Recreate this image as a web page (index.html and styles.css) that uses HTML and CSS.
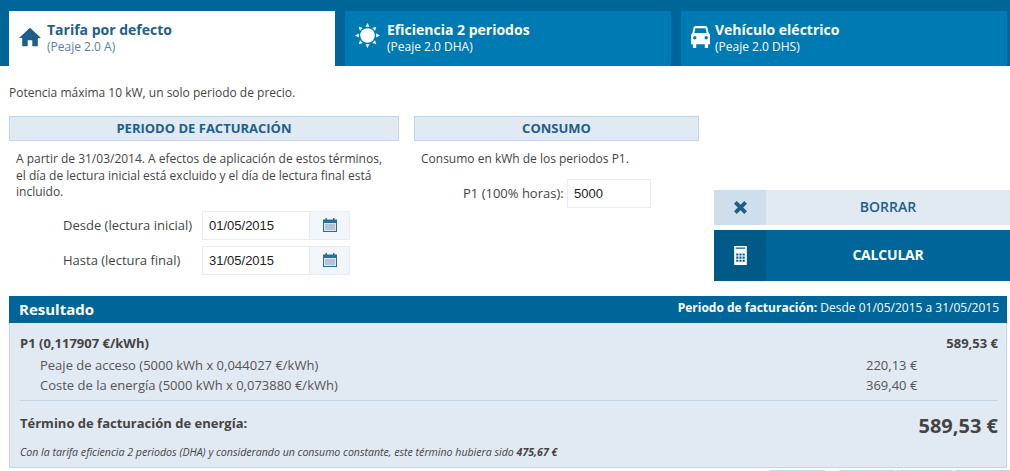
FILE: index.html
```html
<!DOCTYPE html>
<html lang="es">
<head>
<meta charset="utf-8">
<title>Simulador de factura</title>
<link rel="stylesheet" href="styles.css">
</head>
<body>
<nav class="tabs">
  <a class="tab tab-active">
    <svg class="tab-icon icon-home" viewBox="0 0 24 20"><path d="M12 0 L24 11 H20.5 V20 H14.5 V13.5 H9.5 V20 H3.5 V11 H0 Z"/></svg>
    <span class="tab-text"><b>Tarifa por defecto</b><small>(Peaje 2.0 A)</small></span>
  </a>
  <a class="tab">
    <svg class="tab-icon icon-sun" viewBox="0 0 26 26"><circle cx="13" cy="13" r="7.6"/><path d="M13 0 L15 4 H11 Z M13 26 L11 22 H15 Z M0 13 L4 11 V15 Z M26 13 L22 15 V11 Z M3.8 3.8 L8 5.2 L5.2 8 Z M22.2 3.8 L20.8 8 L18 5.2 Z M3.8 22.2 L5.2 18 L8 20.8 Z M22.2 22.2 L18 20.8 L20.8 18 Z"/></svg>
    <span class="tab-text"><b>Eficiencia 2 periodos</b><small>(Peaje 2.0 DHA)</small></span>
  </a>
  <a class="tab">
    <svg class="tab-icon icon-car" viewBox="0 0 20 23"><path fill-rule="evenodd" d="M5 0 H15 C16.2 0 17 .8 17.4 2 L18.6 7.500 C19.6 8 20 8.900 20 10 V19 H18 V23 H14.500 V19 H5.500 V23 H2 V19 H0 V10 C0 8.900 .4 8 1.400 7.500 L2.600 2 C3 .8 3.800 0 5 0 Z M5 2.200 C4.700 2.200 4.600 2.400 4.500 2.700 L3.500 7.300 H16.500 L15.500 2.700 C15.400 2.400 15.300 2.200 15 2.200 Z M4 10.500 A1.800 1.800 0 1 0 4 14.100 A1.800 1.800 0 1 0 4 10.500 Z M16 10.500 A1.800 1.800 0 1 0 16 14.100 A1.800 1.800 0 1 0 16 10.500 Z"/></svg>
    <span class="tab-text"><b>Vehículo eléctrico</b><small>(Peaje 2.0 DHS)</small></span>
  </a>
</nav>

<p class="intro">Potencia máxima 10 kW, un solo periodo de precio.</p>

<main class="columns">
  <section class="col col-period">
    <h2 class="col-title">PERIODO DE FACTURACIÓN</h2>
    <p class="col-text">A partir de 31/03/2014. A efectos de aplicación de estos términos, el día de lectura inicial está excluido y el día de lectura final está incluido.</p>
    <div class="date-row">
      <label class="date-label">Desde (lectura inicial)</label>
      <div class="date-field"><span class="date-value">01/05/2015</span><span class="date-btn"><svg class="cal" viewBox="0 0 14 14"><use href="#cal-icon"/></svg></span></div>
    </div>
    <div class="date-row">
      <label class="date-label">Hasta (lectura final)</label>
      <div class="date-field"><span class="date-value">31/05/2015</span><span class="date-btn"><svg class="cal" viewBox="0 0 14 14"><use href="#cal-icon"/></svg></span></div>
    </div>
  </section>

  <section class="col col-consumo">
    <h2 class="col-title">CONSUMO</h2>
    <p class="col-text">Consumo en kWh de los periodos P1.</p>
    <div class="consumo-row">
      <label class="consumo-label">P1 (100% horas):</label>
      <span class="consumo-value">5000</span>
    </div>
  </section>

  <section class="col col-actions">
    <button class="action action-clear"><span class="action-icon"><svg viewBox="0 0 12 12" width="13" height="13"><path d="M2.500 0 L6 3.500 L9.500 0 L12 2.500 L8.500 6 L12 9.500 L9.500 12 L6 8.500 L2.500 12 L0 9.500 L3.500 6 L0 2.500 Z"/></svg></span><span class="action-text">BORRAR</span></button>
    <button class="action action-calc"><span class="action-icon"><svg viewBox="0 0 12 18" width="13" height="19"><path fill-rule="evenodd" d="M0 0 H12 V18 H0 Z M2 7 V9 H4 V7 Z M5 7 V9 H7 V7 Z M8 7 V9 H10 V7 Z M2 10 V12 H4 V10 Z M5 10 V12 H7 V10 Z M8 10 V12 H10 V10 Z M2 13 V15 H4 V13 Z M5 13 V15 H7 V13 Z M8 13 V15 H10 V13 Z M1.500 1.500 V2.500 H10.500 V1.500 Z"/></svg></span><span class="action-text">CALCULAR</span></button>
  </section>
</main>

<section class="result">
  <header class="result-head">
    <h2 class="result-title">Resultado</h2>
    <p class="result-period"><b>Periodo de facturación:</b> Desde 01/05/2015 a 31/05/2015</p>
  </header>
  <div class="result-body">
    <div class="line line-main"><span>P1 (0,117907 €/kWh)</span><span>589,53 €</span></div>
    <div class="line line-sub"><span>Peaje de acceso (5000 kWh x 0,044027 €/kWh)</span><span class="amount">220,13 €</span></div>
    <div class="line line-sub"><span>Coste de la energía (5000 kWh x 0,073880 €/kWh)</span><span class="amount">369,40 €</span></div>
    <div class="total"><span class="total-label">Término de facturación de energía:</span><span class="total-value">589,53 €</span></div>
    <p class="note">Con la tarifa eficiencia 2 periodos (DHA) y considerando un consumo constante, este término hubiera sido <b>475,67 €</b></p>
  </div>
</section>

<div class="below"><span class="below-box"></span><span class="below-box"></span><span class="below-box"></span><span class="below-box"></span></div>

<svg class="defs" width="0" height="0"><symbol id="cal-icon" viewBox="0 0 14 14"><path fill="#2a6f9c" d="M0 1.500 H2.500 V0 H4 V1.500 H10 V0 H11.500 V1.500 H14 V14 H0 Z"/><path fill="#dbe5ef" d="M1 5 H13 V13 H1 Z"/><path fill="#8aa6bb" d="M2 6.500 H12 V7.500 H2 Z M2 8.500 H12 V9.500 H2 Z M2 10.500 H12 V11.500 H2 Z"/></symbol></svg>
</body>
</html>
```
FILE: styles.css
```css
* { box-sizing: border-box; }
html, body { margin: 0; padding: 0; }
body {
  width: 1010px;
  height: 471px;
  overflow: hidden;
  background: #fff;
  color: #444;
  font-family: "Open Sans", "Noto Sans", sans-serif;
  font-size: 12px;
}
.tabs {
  display: flex;
  gap: 10px;
  height: 66px;
  padding: 11px 3px 0 9px;
  background: #006699;
}
.tab {
  flex: 0 0 326px;
  display: flex;
  align-items: flex-start;
  padding: 10px 0 0 10px;
  background: #007ab3;
  color: #fff;
}
.tab-active { background: #fff; color: #1d5f8a; }
.tab-active small { color: #5b7f9f; }
.tab-icon { fill: currentColor; flex: none; }
.icon-home { width: 22px; height: 20px; margin: 6px 6px 0 0; }
.icon-sun { width: 25px; height: 25px; margin: 2px 7px 0 0; }
.icon-car { width: 19px; height: 22px; margin: 5px 5px 0 0; }
.tab-text { display: flex; flex-direction: column; }
.tab-text b { font-size: 14px; line-height: 18px; font-weight: 700; }
.tab-text small { font-size: 12px; line-height: 16px; }
.intro { margin: 0; padding: 19px 0 0 9px; height: 50px; line-height: 15px; }
.columns { display: flex; height: 180px; padding-left: 9px; }
.col-period { width: 390px; margin-right: 15px; }
.col-consumo { width: 285px; margin-right: 15px; }
.col-actions { width: 296px; padding-top: 74px; display: flex; flex-direction: column; gap: 5px; }
.col-title {
  margin: 0;
  height: 25px;
  background: #e1e9f3;
  border: 1px solid #c5d5e5;
  color: #1d5f8a;
  font-size: 13px;
  font-weight: 700;
  line-height: 23px;
  text-align: center;
}
.col-text { margin: 10px 0 0; padding: 0 7px; line-height: 16.5px; }
.col-period .col-text { height: 60px; }
.date-row { display: flex; align-items: center; height: 29px; margin-bottom: 6px; }
.date-row:last-child { margin-bottom: 0; }
.date-label { width: 193px; padding: 0 0 2px 54px; font-size: 13px; white-space: nowrap; }
.date-field { display: flex; width: 148px; height: 29px; border: 1px solid #e7edf3; }
.date-value { flex: 1; padding-left: 6px; font: 13px/27px "Liberation Sans", Arial, sans-serif; color: #222; }
.date-btn { width: 40px; padding-bottom: 2px; background: #f2f6fa; border-left: 1px solid #e7edf3; display: flex; align-items: center; justify-content: center; }
.cal { width: 14px; height: 14px; }
.consumo-row { display: flex; align-items: center; height: 29px; margin-top: 11px; }
.consumo-label { width: 153px; padding-left: 49px; font-size: 13px; white-space: nowrap; }
.consumo-value { width: 84px; height: 29px; border: 1px solid #e7edf3; padding-left: 6px; font: 13px/27px "Liberation Sans", Arial, sans-serif; color: #222; }
.action { display: flex; align-items: stretch; padding: 0; border: 0; font-family: inherit; font-size: 14px; font-weight: 600; }
.action-clear { height: 35px; background: #e1e9f3; color: #1d5f8a; }
.action-calc { height: 51px; background: #006699; color: #fff; font-weight: 700; letter-spacing: -0.2px; }
.action-icon { width: 52px; display: flex; align-items: center; justify-content: center; }
.action-clear .action-icon { background: #cfdeec; }
.action-calc .action-icon { background: #005a87; }
.action-icon svg { fill: currentColor; }
.action-text { flex: 1; align-self: center; padding-bottom: 2px; text-align: center; }
.result { margin: 0 3px 0 9px; }
.result-head { display: flex; justify-content: space-between; align-items: center; height: 27px; padding: 0 7px 0 10px; background: #006699; color: #fff; }
.result-title { margin: 0 0 2px; font-size: 15px; font-weight: 700; }
.result-period { margin: 0 1px 5px 0; font-size: 12px; }
.result-body { height: 145px; padding: 10px 8px 0 10px; background: #e1e9f3; border: 1px solid #c5d5e5; border-top: 0; }
.line { display: flex; justify-content: space-between; line-height: 20px; }
.line-main { font-size: 13px; font-weight: 700; height: 22px; }
.line-sub { font-size: 13px; padding-left: 20px; color: #555; }
.amount { width: 132px; }
.total { display: flex; justify-content: space-between; align-items: center; height: 44px; margin: 5px 0 1px; border-top: 1px solid #c5d5e5; }
.total-label { font-size: 13px; font-weight: 700; }
.total-value { padding-top: 5px; font-size: 20px; font-weight: 700; }
.note { margin: 0; font-size: 10.6px; font-style: italic; line-height: 14px; color: #444; }
.below { display: flex; justify-content: flex-end; gap: 3px; margin-top: 2px; }
.below-box { width: 55px; height: 1px; background: #c5d5e5; }
.below-box:first-child { margin-right: 11px; }
.defs { position: absolute; }
```
